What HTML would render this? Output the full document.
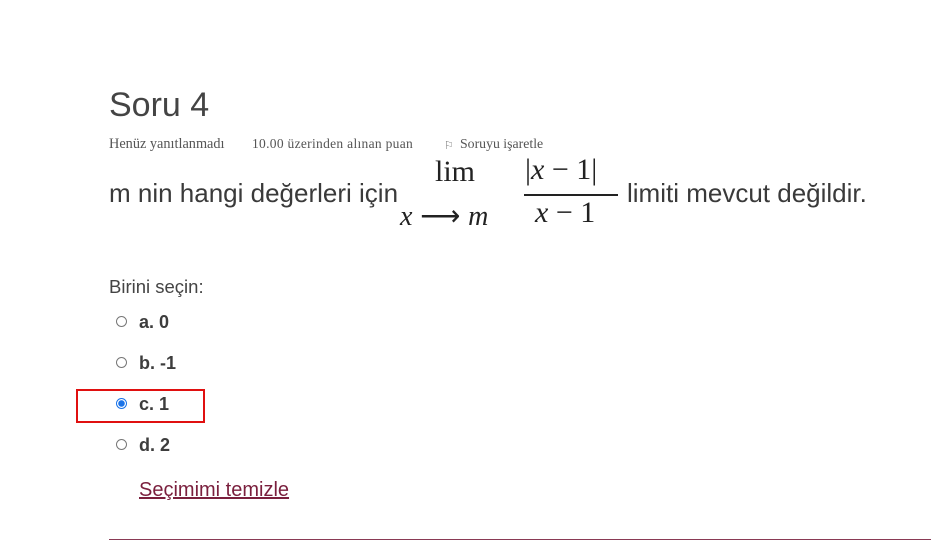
<!DOCTYPE html>
<html><head><meta charset="utf-8"><style>
body{margin:0;width:931px;height:544px;background:#fff;position:relative;overflow:hidden;font-family:"Liberation Sans",sans-serif;color:#3a3a3a}
.a{position:absolute;white-space:nowrap}
.m{font-family:"Liberation Serif",serif;font-style:italic}
.r{font-family:"Liberation Serif",serif}
.rad{position:absolute;width:11px;height:11px;border:1px solid #777;border-radius:50%;box-sizing:border-box}
.opt{position:absolute;font-size:18px;font-weight:bold;color:#3d3d3d}
</style></head><body>
<div class="a" style="left:109px;top:86px;font-size:34px;color:#444">Soru 4</div>
<div class="a r" style="left:109px;top:136px;font-size:14.3px;color:#555">Henüz yanıtlanmadı</div>
<div class="a r" style="left:252px;top:136px;font-size:13.5px;color:#555;letter-spacing:0.3px">10.00 üzerinden alınan puan</div>
<div class="a" style="left:444px;top:139px;font-size:11px;color:#777">⚐</div>
<div class="a r" style="left:460px;top:136px;font-size:13.8px;color:#555">Soruyu işaretle</div>
<div class="a" style="left:109px;top:178px;font-size:26px;color:#3a3a3a">m nin hangi değerleri için</div>
<div class="a r" style="left:435px;top:155px;font-size:30px;color:#222">lim</div>
<div class="a" style="left:400px;top:199px;font-size:28px;color:#222"><span class="m">x</span> <span class="r">⟶</span> <span class="m">m</span></div>
<div class="a r" style="left:525px;top:153px;font-size:30px;color:#222">|<i>x</i> − 1|</div>
<div class="a" style="left:524px;top:194px;width:94px;height:1.5px;background:#222"></div>
<div class="a r" style="left:535px;top:196px;font-size:30px;color:#222"><i>x</i> − 1</div>
<div class="a" style="left:627px;top:178px;font-size:26px;color:#3a3a3a">limiti mevcut değildir.</div>
<div class="a" style="left:109px;top:276px;font-size:18.5px;color:#444">Birini seçin:</div>
<div class="rad" style="left:116px;top:316px"></div><div class="opt" style="left:139px;top:312px">a. 0</div>
<div class="rad" style="left:116px;top:357px"></div><div class="opt" style="left:139px;top:353px">b. -1</div>
<div class="rad" style="left:116px;top:398px;border-color:#1a73e8;background:radial-gradient(circle,#1a73e8 0 3px,#fff 3.5px)"></div><div class="opt" style="left:139px;top:394px">c. 1</div>
<div class="a" style="left:76px;top:389px;width:129px;height:34px;border:2.5px solid #e01010;box-sizing:border-box"></div>
<div class="rad" style="left:116px;top:439px"></div><div class="opt" style="left:139px;top:435px">d. 2</div>
<div class="a" style="left:139px;top:479px;font-size:20px;color:#7a1f3d;text-decoration:underline">Seçimimi temizle</div>
<div class="a" style="left:109px;top:539px;width:822px;height:1px;background:#8a3a55"></div>
</body></html>
